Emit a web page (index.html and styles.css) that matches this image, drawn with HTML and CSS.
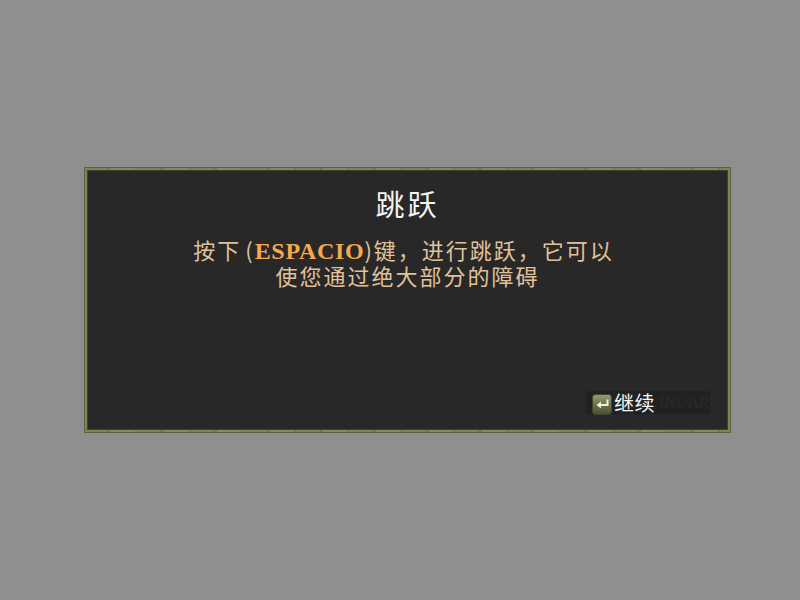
FILE: index.html
```html
<!DOCTYPE html>
<html lang="zh">
<head>
<meta charset="utf-8">
<title>跳跃</title>
<link rel="stylesheet" href="styles.css">
</head>
<body>
<main class="panel">
  <h1 class="title">跳跃</h1>
  <p class="message"><span class="line">按下 (<strong class="key">ESPACIO</strong>)键，进行跳跃，它可以&nbsp;&nbsp;</span><span class="line">使您通过绝大部分的障碍</span></p>
  <div class="actions">
    <button class="continue" type="button">
      <svg class="enter-icon" width="20" height="21" viewBox="0 0 20 21" aria-hidden="true">
        <defs>
          <linearGradient id="keycap" x1="0" y1="0" x2="0" y2="1">
            <stop offset="0" stop-color="#969c74"/>
            <stop offset="0.5" stop-color="#6c7249"/>
            <stop offset="1" stop-color="#4c5033"/>
          </linearGradient>
        </defs>
        <rect x="0.5" y="0.5" width="19" height="20" rx="3" fill="url(#keycap)" stroke="#41442d"/>
        <path d="M15.5 5.5v5.5H8" fill="none" stroke="#eef0dc" stroke-width="2"/>
        <path d="M9 7.5 4.5 11 9 14.5z" fill="#eef0dc"/>
      </svg>
      <span class="label">继续</span>
      <span class="ghost">INUAR</span>
    </button>
  </div>
</main>
</body>
</html>
```
FILE: styles.css
```css
* {
  box-sizing: border-box;
}

html,
body {
  height: 100%;
  margin: 0;
}

body {
  display: flex;
  align-items: center;
  padding-left: 84px;
  background: #8f8f8f;
  font-family: "Noto Sans CJK SC", "Liberation Serif", serif;
}

.panel {
  display: flex;
  flex-direction: column;
  width: 647px;
  height: 266px;
  padding: 16px 18px 16px;
  border: 3px solid transparent;
  background:
    linear-gradient(#282828, #282828) padding-box,
    repeating-linear-gradient(90deg, #7d8655 0 23px, #737b4e 23px 27px, #838c5c 27px 51px, #767e50 51px 53px) border-box;
  box-shadow: inset 0 0 0 1px #3f4230;
  outline: 1px solid #5c6140;
  outline-offset: -1px;
}

.title {
  margin: 0;
  font-size: 29px;
  line-height: 34px;
  font-weight: 400;
  letter-spacing: 3px;
  color: #f4f4f4;
  text-align: center;
}

.message {
  margin: 16px 0 0;
  font-size: 22px;
  letter-spacing: 2px;
  color: #e0c19b;
  text-align: center;
}

.line {
  display: block;
  height: 26px;
  line-height: 26px;
  word-spacing: -3px;
}

.key {
  font-family: "Liberation Serif", serif;
  font-weight: 700;
  font-size: 24px;
  letter-spacing: 0.7px;
  color: #f7a84c;
}

.actions {
  display: flex;
  justify-content: flex-end;
  margin-top: auto;
}

.continue {
  display: flex;
  align-items: center;
  width: 124px;
  height: 23px;
  padding: 0 0 0 6px;
  border: 0;
  background: #212121;
  font: inherit;
}

.enter-icon {
  flex: none;
  margin-top: 4px;
}

.label {
  flex: none;
  margin-left: 2px;
  font-size: 20px;
  letter-spacing: 0.5px;
  line-height: 23px;
  color: #f6f6f6;
}

.ghost {
  margin-left: 4px;
  font-family: "Liberation Serif", serif;
  font-size: 16px;
  font-weight: 400;
  color: #2a2a2a;
  white-space: nowrap;
}
```
